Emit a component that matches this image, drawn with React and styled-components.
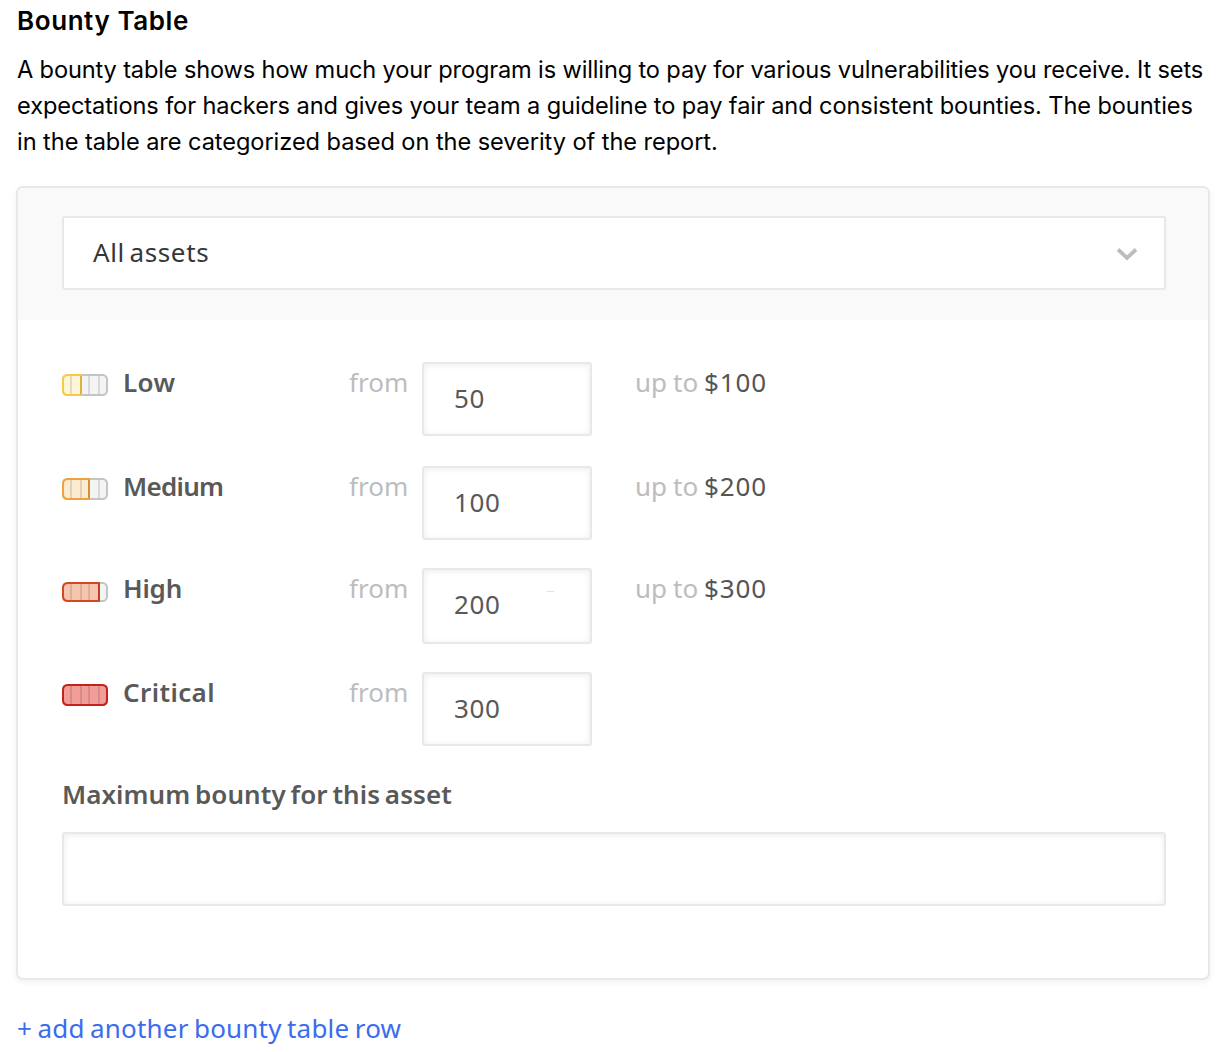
import React from "react";
import styled, { createGlobalStyle } from "styled-components";

const GlobalStyle = createGlobalStyle`
  * { box-sizing: border-box; }
  body { margin: 0; background: #fff; }
`;

const Page = styled.main`
  height: 1052px;
  padding: 3px 18px 0 16px;
  overflow: hidden;
  font-family: "Noto Sans", "Open Sans", sans-serif;
  font-size: 26px;
  line-height: 36px;
  color: #555;
`;

const Title = styled.h1`
  margin: 0 0 13px 1px;
  font: 600 26px/36px Inter, sans-serif;
  letter-spacing: 0.58px;
  color: #000;
`;

const Intro = styled.p`
  margin: 0 0 26px 1px;
  font: 400 23.6px/36px Inter, sans-serif;
  color: #000;
  white-space: nowrap;
`;

const IntroLine = styled.span`
  display: block;
  letter-spacing: ${(p) => p.$tracking}px;
`;

const Card = styled.section`
  height: 794px;
  border: 2px solid #e8e8e8;
  border-radius: 7px;
  overflow: hidden;
  background: #fff;
  box-shadow: 0 2px 6px rgba(0, 0, 0, 0.06);
`;

const CardHeader = styled.header`
  padding: 28px 42px 30px 44px;
  background: #f9f9f9;
`;

const Select = styled.div`
  display: flex;
  align-items: center;
  justify-content: space-between;
  height: 74px;
  padding: 0 26px 2px 29px;
  border: 2px solid #e8e8e8;
  border-radius: 3px;
  background: #fff;
  color: #363636;
  letter-spacing: 0.65px;
  word-spacing: -3px;
`;

const Chevron = styled.svg`
  margin-top: 4px;
`;

const CardBody = styled.div`
  padding: 42px 42px 0 44px;
`;

const Row = styled.div`
  display: flex;
  height: ${(p) => p.$height}px;
`;

const Severity = styled.div`
  display: flex;
  width: 286px;
`;

const Label = styled.span`
  margin: 2px 0 0 15px;
  height: 36px;
  font-weight: 600;
  color: #595959;
  letter-spacing: ${(p) => p.$tracking || 0}px;
`;

const GaugeSvg = styled.svg`
  display: block;
  flex: none;
  margin-top: ${(p) => p.$top}px;
`;

const From = styled.span`
  width: 74px;
  padding: 2px 0 0 1px;
  color: #bdbdbd;
`;

const Field = styled.input`
  display: block;
  width: ${(p) => p.$width};
  height: ${(p) => p.$height || 74}px;
  margin: 0;
  padding: 0 30px ${(p) => p.$lift || 2}px;
  border: 2px solid #e8e8e8;
  border-radius: 3px;
  outline: none;
  background: ${(p) => (p.$tick ? "linear-gradient(#e2e2e2, #e2e2e2) 123px 21px / 7px 1px no-repeat, #fff" : "#fff")};
  box-shadow: inset 0 1px 6px rgba(0, 0, 0, 0.08);
  font: inherit;
  letter-spacing: 0.6px;
  color: #595959;
`;

const UpTo = styled.span`
  margin-left: 43px;
  padding-top: 2px;
  color: #bdbdbd;
  white-space: pre;
  letter-spacing: 0;
  word-spacing: -0.8px;
`;

const Amount = styled.span`
  color: #555;
  letter-spacing: 0.8px;
`;

const MaxLabel = styled.label`
  display: block;
  margin-bottom: 20px;
  font-weight: 600;
  color: #595959;
  letter-spacing: 0.06px;
  word-spacing: -2px;
`;

const AddLink = styled.a`
  display: inline-block;
  margin: 30px 0 0 1px;
  color: #3a6cf0;
  letter-spacing: 0.2px;
  word-spacing: -1.6px;
  text-decoration: none;
`;

const rows = [
  { name: "Low", value: "50", cap: "$100", fill: 20, stroke: "#f7ca45", tint: "#fff6d8", gauge: 22, gaugeTop: 12, height: 104, tracking: 0.4 },
  { name: "Medium", value: "100", cap: "$200", fill: 28, stroke: "#eea33c", tint: "#fcebd0", gauge: 22, gaugeTop: 12, height: 102, tracking: -0.7 },
  { name: "High", value: "200", cap: "$300", fill: 38, stroke: "#d4481f", tint: "#f6c5ae", gauge: 20, gaugeTop: 14, height: 104, tracking: -0.2, field: 76, tick: true },
  { name: "Critical", value: "300", fill: 46, stroke: "#c4231b", tint: "#f29d98", gauge: 22, gaugeTop: 12, height: 104, tracking: 0.4 },
];

function Gauge({ fill, stroke, tint, h, top }) {
  const full = fill === 46;
  const filled = full
    ? `M6 1H40Q45 1 45 6V${h - 6}Q45 ${h - 1} 40 ${h - 1}H6Q1 ${h - 1} 1 ${h - 6}V6Q1 1 6 1Z`
    : `M6 1H${fill - 1}V${h - 1}H6Q1 ${h - 1} 1 ${h - 6}V6Q1 1 6 1Z`;
  return (
    <GaugeSvg $top={top} width="46" height={h} viewBox={`0 0 46 ${h}`}>
      <rect x="1" y="1" width="44" height={h - 2} rx="4.5" fill="#f4f4f4" stroke="#c4c4c4" strokeWidth="2" />
      <path d={filled} fill={tint} stroke={stroke} strokeWidth="2" />
      {[8, 18, 26, 36].map((x) => (
        <rect key={x} x={x} y="2" width="2" height={h - 4} fill="#000" fillOpacity="0.11" />
      ))}
    </GaugeSvg>
  );
}

function BountyRow({ row }) {
  return (
    <Row $height={row.height}>
      <Severity>
        <Gauge fill={row.fill} stroke={row.stroke} tint={row.tint} h={row.gauge} top={row.gaugeTop} />
        <Label $tracking={row.tracking}>{row.name}</Label>
      </Severity>
      <From>from</From>
      <Field $width="170px" $height={row.field} $lift={row.field ? 4 : 2} $tick={row.tick} defaultValue={row.value} />
      {row.cap && (
        <UpTo>
          up to <Amount>{row.cap}</Amount>
        </UpTo>
      )}
    </Row>
  );
}

export default function App() {
  return (
    <Page>
      <GlobalStyle />
      <Title>Bounty Table</Title>
      <Intro>
        <IntroLine $tracking={-0.145}>A bounty table shows how much your program is willing to pay for various vulnerabilities you receive. It sets</IntroLine>
        <IntroLine $tracking={-0.1}>expectations for hackers and gives your team a guideline to pay fair and consistent bounties. The bounties</IntroLine>
        <IntroLine $tracking={-0.065}>in the table are categorized based on the severity of the report.</IntroLine>
      </Intro>
      <Card>
        <CardHeader>
          <Select>
            All assets
            <Chevron width="22" height="14" viewBox="0 0 22 14" fill="none">
              <path d="M2 2.5L11 11L20 2.5" stroke="#bdbdbd" strokeWidth="3.8" />
            </Chevron>
          </Select>
        </CardHeader>
        <CardBody>
          {rows.map((row) => (
            <BountyRow key={row.name} row={row} />
          ))}
          <MaxLabel htmlFor="maximum">Maximum bounty for this asset</MaxLabel>
          <Field id="maximum" $width="100%" />
        </CardBody>
      </Card>
      <AddLink>+ add another bounty table row</AddLink>
    </Page>
  );
}
